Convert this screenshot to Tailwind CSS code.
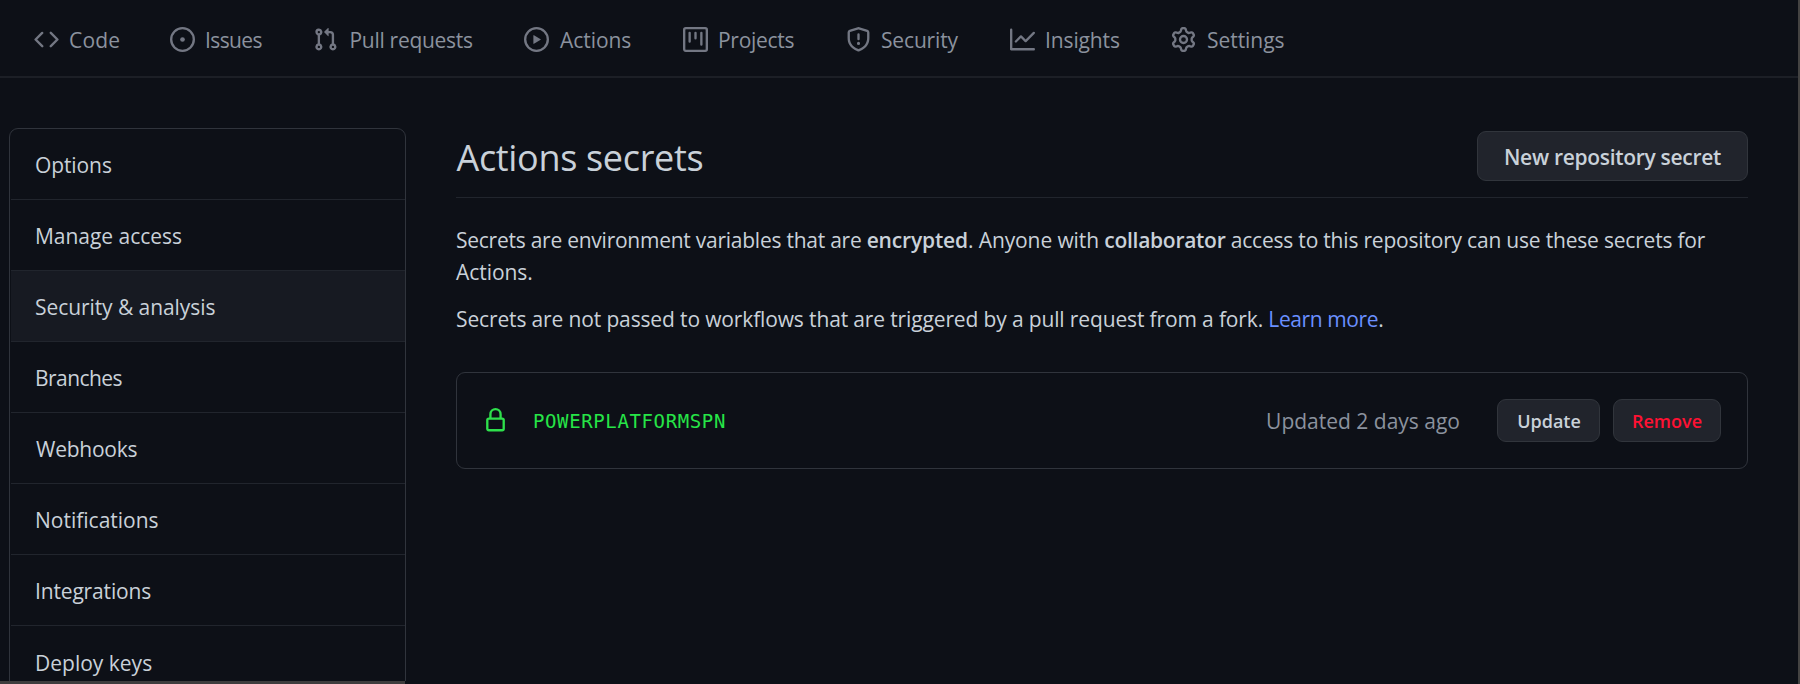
<!DOCTYPE html>
<html lang="en">
<head>
<meta charset="utf-8">
<title>Actions secrets</title>
<script src="https://cdn.jsdelivr.net/npm/@tailwindcss/browser@4"></script>
</head>
<body class="bg-[#0d1017] text-[#c9d1d9] font-['Open_Sans',sans-serif] text-[21px] leading-[32px]">
<div class="w-[1800px] h-[684px] overflow-hidden flex">
<div class="flex-1 flex flex-col min-w-0">
  <nav class="flex items-center h-[78px] shrink-0 border-b-2 border-[#1c1f26] pl-[34px] pt-[3px] text-[#8b929e] whitespace-nowrap">
    <a class="flex items-center gap-[10px] w-[136px] tracking-[0.2px]">
      <svg class="w-[25px] h-[25px] shrink-0 fill-[#737783]" viewBox="0 0 16 16"><path fill-rule="evenodd" d="M4.72 3.22a.75.75 0 011.06 1.06L2.06 8l3.72 3.72a.75.75 0 11-1.06 1.06L.47 8.53a.75.75 0 010-1.06l4.25-4.25zm6.56 0a.75.75 0 10-1.06 1.06L13.94 8l-3.72 3.72a.75.75 0 101.06 1.06l4.25-4.25a.75.75 0 000-1.06l-4.25-4.25z"/></svg>Code</a>
    <a class="flex items-center gap-[10px] w-[142.5px] tracking-[-0.6px]">
      <svg class="w-[25px] h-[25px] shrink-0 fill-[#737783]" viewBox="0 0 16 16"><path d="M8 9.5a1.5 1.5 0 100-3 1.5 1.5 0 000 3z"/><path fill-rule="evenodd" d="M8 1.5a6.5 6.5 0 100 13 6.5 6.5 0 000-13zM0 8a8 8 0 1116 0A8 8 0 010 8z"/></svg>Issues</a>
    <a class="flex items-center gap-[12px] w-[211.5px] tracking-[-0.29px]">
      <svg class="w-[25px] h-[25px] shrink-0 fill-[#737783]" viewBox="0 0 16 16"><path fill-rule="evenodd" d="M7.177 3.073L9.573.677A.25.25 0 0110 .854v4.792a.25.25 0 01-.427.177L7.177 3.427a.25.25 0 010-.354zM3.75 2.5a.75.75 0 100 1.5.75.75 0 000-1.5zm-2.25.75a2.25 2.25 0 113 2.122v5.256a2.251 2.251 0 11-1.5 0V5.372A2.25 2.25 0 011.5 3.25zM11 2.5h-1V4h1a1 1 0 011 1v5.628a2.251 2.251 0 101.5 0V5A2.5 2.5 0 0011 2.5zm1 10.25a.75.75 0 111.5 0 .75.75 0 01-1.5 0zM3.75 12a.75.75 0 100 1.5.75.75 0 000-1.5z"/></svg>Pull requests</a>
    <a class="flex items-center gap-[11px] w-[159px] tracking-[-0.05px]">
      <svg class="w-[25px] h-[25px] shrink-0 fill-[#737783]" viewBox="0 0 16 16"><path fill-rule="evenodd" d="M1.5 8a6.5 6.5 0 1113 0 6.5 6.5 0 01-13 0zM8 0a8 8 0 100 16A8 8 0 008 0zM6.379 5.227A.25.25 0 006 5.442v5.117a.25.25 0 00.379.214l4.264-2.559a.25.25 0 000-.428L6.379 5.227z"/></svg>Actions</a>
    <a class="flex items-center gap-[10px] w-[163px] tracking-[-0.28px]">
      <svg class="w-[25px] h-[25px] shrink-0 fill-[#737783]" viewBox="0 0 16 16"><path fill-rule="evenodd" d="M1.75 0A1.75 1.75 0 000 1.75v12.5C0 15.216.784 16 1.75 16h12.5A1.75 1.75 0 0016 14.25V1.75A1.75 1.75 0 0014.25 0H1.75zM1.5 1.75a.25.25 0 01.25-.25h12.5a.25.25 0 01.25.25v12.5a.25.25 0 01-.25.25H1.75a.25.25 0 01-.25-.25V1.75zM11.75 3a.75.75 0 00-.75.75v7.5a.75.75 0 001.5 0v-7.5a.75.75 0 00-.75-.75zm-8.25.75a.75.75 0 011.5 0v5.5a.75.75 0 01-1.5 0v-5.5zM8 3a.75.75 0 00-.75.75v3.5a.75.75 0 001.5 0v-3.5A.75.75 0 008 3z"/></svg>Projects</a>
    <a class="flex items-center gap-[10px] w-[164px] tracking-[-0.16px]">
      <svg class="w-[25px] h-[25px] shrink-0 fill-[#737783]" viewBox="0 0 16 16"><path fill-rule="evenodd" d="M7.467.133a1.75 1.75 0 011.066 0l5.25 1.68A1.75 1.75 0 0115 3.48V7c0 1.566-.32 3.182-1.303 4.682-.983 1.498-2.585 2.813-5.032 3.855a1.7 1.7 0 01-1.33 0c-2.447-1.042-4.049-2.357-5.032-3.855C1.32 10.182 1 8.566 1 7V3.48a1.75 1.75 0 011.217-1.667l5.25-1.68zm.61 1.429a.25.25 0 00-.153 0l-5.25 1.68a.25.25 0 00-.174.238V7c0 1.358.275 2.666 1.057 3.86.784 1.194 2.121 2.34 4.366 3.297a.2.2 0 00.154 0c2.245-.956 3.582-2.104 4.366-3.298C13.225 9.666 13.5 8.36 13.5 7V3.48a.25.25 0 00-.174-.237l-5.25-1.68zM9 10.5a1 1 0 11-2 0 1 1 0 012 0zm-.25-5.75a.75.75 0 10-1.5 0v3a.75.75 0 001.5 0v-3z"/></svg>Security</a>
    <a class="flex items-center gap-[10px] w-[161px] tracking-[-0.12px]">
      <svg class="w-[25px] h-[25px] shrink-0 fill-[#737783]" viewBox="0 0 16 16"><path fill-rule="evenodd" d="M1.5 1.75a.75.75 0 00-1.5 0v12.5c0 .414.336.75.75.75h14.5a.75.75 0 000-1.5H1.5V1.75zm14.28 2.53a.75.75 0 00-1.06-1.06L10 7.94 7.53 5.47a.75.75 0 00-1.06 0L3.22 8.72a.75.75 0 001.06 1.06L7 7.06l2.47 2.47a.75.75 0 001.06 0l5.25-5.25z"/></svg>Insights</a>
    <a class="flex items-center gap-[11px] tracking-[-0.05px]">
      <svg class="w-[25px] h-[25px] shrink-0 fill-[#737783]" viewBox="0 0 16 16"><path fill-rule="evenodd" d="M7.429 1.525a6.593 6.593 0 011.142 0c.036.003.108.036.137.146l.289 1.105c.147.56.55.967.997 1.189.174.086.341.183.501.29.417.278.97.423 1.53.27l1.102-.303c.11-.03.175.016.195.046.219.31.41.641.573.989.014.031.022.11-.059.19l-.815.806c-.411.406-.562.957-.53 1.456a4.588 4.588 0 010 .582c-.032.499.119 1.05.53 1.456l.815.806c.08.08.073.159.059.19a6.494 6.494 0 01-.573.99c-.02.029-.086.074-.195.045l-1.103-.303c-.559-.153-1.112-.008-1.529.27-.16.107-.327.204-.5.29-.449.222-.851.628-.998 1.189l-.289 1.105c-.029.11-.101.143-.137.146a6.613 6.613 0 01-1.142 0c-.036-.003-.108-.037-.137-.146l-.289-1.105c-.147-.56-.55-.967-.997-1.189a4.502 4.502 0 01-.501-.29c-.417-.278-.97-.423-1.53-.27l-1.102.303c-.11.03-.175-.016-.195-.046a6.492 6.492 0 01-.573-.989c-.014-.031-.022-.11.059-.19l.815-.806c.411-.406.562-.957.53-1.456a4.587 4.587 0 010-.582c.032-.499-.119-1.05-.53-1.456l-.815-.806c-.08-.08-.073-.159-.059-.19a6.44 6.44 0 01.573-.99c.02-.029.086-.075.195-.045l1.103.303c.559.153 1.112.008 1.529-.27.16-.107.327-.204.5-.29.449-.222.851-.628.998-1.189l.289-1.105c.029-.11.101-.143.137-.146zM8 0c-.236 0-.47.01-.701.03-.743.065-1.29.615-1.458 1.261l-.29 1.106c-.017.066-.078.158-.211.224a5.994 5.994 0 00-.668.386c-.123.082-.233.09-.3.071L3.27 2.776c-.644-.177-1.392.02-1.82.63a7.977 7.977 0 00-.704 1.217c-.315.675-.111 1.422.363 1.891l.815.806c.05.048.098.147.088.294a6.084 6.084 0 000 .772c.01.147-.038.246-.088.294l-.815.806c-.474.469-.678 1.216-.363 1.891.2.428.436.835.704 1.218.428.609 1.176.806 1.82.63l1.103-.303c.066-.019.176-.011.299.071.213.143.436.272.668.386.133.066.194.158.212.224l.289 1.106c.169.646.715 1.196 1.458 1.26a8.094 8.094 0 001.402 0c.743-.064 1.29-.614 1.458-1.26l.29-1.106c.017-.066.078-.158.211-.224a5.98 5.98 0 00.668-.386c.123-.082.233-.09.3-.071l1.102.302c.644.177 1.392-.02 1.82-.63.268-.382.505-.789.704-1.217.315-.675.111-1.422-.364-1.891l-.814-.806c-.05-.048-.098-.147-.088-.294a6.1 6.1 0 000-.772c-.01-.147.039-.246.088-.294l.814-.806c.475-.469.679-1.216.364-1.891a7.992 7.992 0 00-.704-1.218c-.428-.609-1.176-.806-1.82-.63l-1.103.303c-.066.019-.176.011-.299-.071a5.991 5.991 0 00-.668-.386c-.133-.066-.194-.158-.212-.224L10.16 1.29C9.99.645 9.444.095 8.701.031A8.094 8.094 0 008 0zm1.5 8a1.5 1.5 0 11-3 0 1.5 1.5 0 013 0zM11 8a3 3 0 11-6 0 3 3 0 016 0z"/></svg>Settings</a>
  </nav>

  <div class="flex flex-1 min-h-0">
    <aside class="w-[406px] shrink-0 flex flex-col">
      <div class="flex-1 min-h-0 overflow-hidden pt-[50px] pl-[9px]">
        <ul class="w-[397px] h-[700px] border border-[#30343c] rounded-[9px] pl-px whitespace-nowrap">
          <li class="h-[71px] border-b border-[#21252d] pl-[24px] pt-[20px] tracking-[-0.1px]">Options</li>
          <li class="h-[71px] border-b border-[#21252d] pl-[24px] pt-[20px] tracking-[-0.03px]">Manage access</li>
          <li class="h-[71px] border-b border-[#21252d] bg-[#171a22] pl-[24px] pt-[20px] tracking-[-0.07px]">Security &amp; analysis</li>
          <li class="h-[71px] border-b border-[#21252d] pl-[24px] pt-[20px] tracking-[-0.56px]">Branches</li>
          <li class="h-[71px] border-b border-[#21252d] pl-[25px] pt-[20px] tracking-[-0.25px]">Webhooks</li>
          <li class="h-[71px] border-b border-[#21252d] pl-[24px] pt-[20px]">Notifications</li>
          <li class="h-[71px] border-b border-[#21252d] pl-[24px] pt-[20px] tracking-[-0.16px]">Integrations</li>
          <li class="h-[71px] pl-[24px] pt-[21px]">Deploy keys</li>
        </ul>
      </div>
      <div class="h-[3px] w-[405px] bg-[#3e3d3e]"></div>
    </aside>

    <main class="ml-[50px] w-[1292px] pt-[53px]">
      <header class="flex justify-between items-start h-[67px] border-b border-[#21252d]">
        <h1 class="text-[36px] leading-[50px] pt-[2px] pl-[0.5px] tracking-[-0.33px]">Actions secrets</h1>
        <button class="w-[271px] h-[50px] rounded-[9px] border border-[#31353c] bg-[#21242c] font-semibold tracking-[-0.3px] pt-px">New repository secret</button>
      </header>
      <p class="mt-[26px] whitespace-nowrap tracking-[-0.25px]">Secrets are environment variables that are <b class="font-semibold tracking-[-0.16px]">encrypted</b><span class="tracking-[-0.1px]">. Anyone with </span><b class="font-semibold tracking-[-0.28px]">collaborator</b><span class="tracking-[-0.2px]"> access to this repository can use these secrets for</span><br><span class="tracking-[-0.05px]">Actions.</span></p>
      <p class="mt-[15px] whitespace-nowrap tracking-[-0.14px]">Secrets are not passed to workflows that are triggered by a pull request from a fork. <a class="text-[#6a8fff] tracking-[-0.4px]">Learn more</a>.</p>
      <section class="mt-[37px] h-[97px] border border-[#30343c] rounded-[9px] flex items-center pl-[26px] pr-[26px]">
        <svg class="w-[25px] h-[25px] fill-[#2ee04c] shrink-0" viewBox="0 0 16 16"><path fill-rule="evenodd" d="M4 4v2h-.25A1.75 1.75 0 002 7.75v5.5c0 .966.784 1.75 1.75 1.75h8.5A1.75 1.75 0 0014 13.25v-5.5A1.75 1.75 0 0012.25 6H12V4a4 4 0 10-8 0zm6.5 2V4a2.5 2.5 0 10-5 0v2h5zM12 7.5h.25a.25.25 0 01.25.25v5.5a.25.25 0 01-.25.25h-8.5a.25.25 0 01-.25-.25v-5.5a.25.25 0 01.25-.25H12z"/></svg>
        <code class="ml-[25px] text-[19px] tracking-[0.62px] text-[#26e547] font-['DejaVu_Sans_Mono',monospace]">POWERPLATFORMSPN</code>
        <span class="ml-auto mr-[37px] text-[#8b929e]">Updated 2 days ago</span>
        <button class="w-[103px] h-[43px] rounded-[9px] border border-[#31353c] bg-[#21242c] text-[18px] leading-[32px] font-semibold pt-px pl-px">Update</button>
        <button class="ml-[13px] w-[108px] h-[43px] rounded-[9px] border border-[#31353c] bg-[#21242c] text-[18px] leading-[32px] font-semibold pt-px text-[#ff1133]">Remove</button>
      </section>
    </main>
  </div>
</div>
<div class="w-[2px] bg-[#444342]"></div>
</div>
</body>
</html>
